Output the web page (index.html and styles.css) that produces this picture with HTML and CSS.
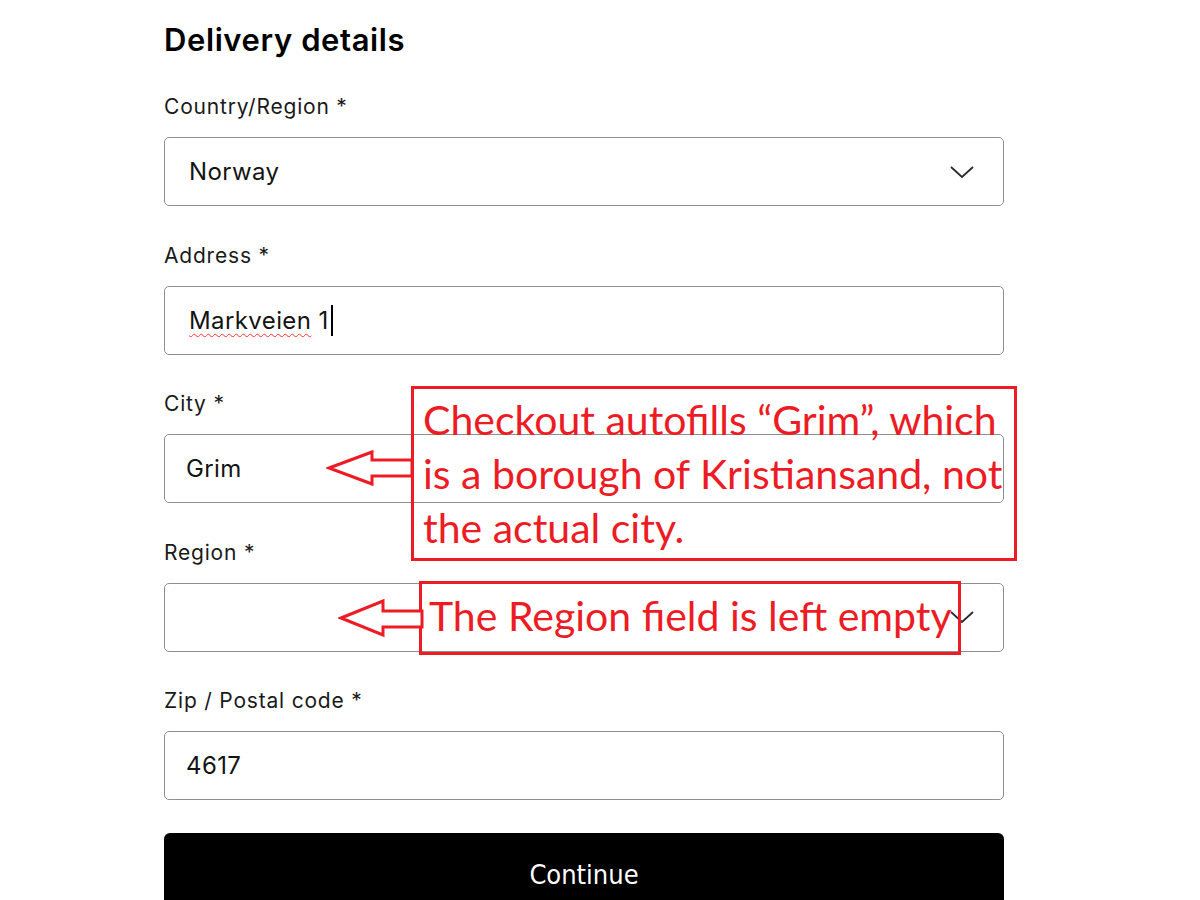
FILE: index.html
```html
<!DOCTYPE html>
<html lang="en">
<head>
<meta charset="utf-8">
<title>Delivery details</title>
<link rel="stylesheet" href="styles.css">
</head>
<body>
<main class="form">
  <h2 class="title">Delivery details</h2>

  <div class="field">
    <div class="label">Country/Region *</div>
    <div class="control select">
      <span class="value value-select">Norway</span>
      <svg class="chevron" width="26" height="14" viewBox="0 0 26 14"><polyline points="2,2 13,12 24,2" fill="none" stroke="#2b2b2b" stroke-width="1.8"/></svg>
    </div>
  </div>

  <div class="field">
    <div class="label">Address *</div>
    <div class="control">
      <span class="value value-select"><span class="misspelled">Markveien</span> 1</span><span class="caret"></span>
    </div>
  </div>

  <div class="field">
    <div class="label">City *</div>
    <div class="control">
      <span class="value">Grim</span>
    </div>
  </div>

  <div class="field">
    <div class="label">Region *</div>
    <div class="control select">
      <span class="value"></span>
      <svg class="chevron" width="26" height="14" viewBox="0 0 26 14"><polyline points="2,2 13,12 24,2" fill="none" stroke="#2b2b2b" stroke-width="1.8"/></svg>
    </div>
  </div>

  <div class="field field-last">
    <div class="label">Zip / Postal code *</div>
    <div class="control">
      <span class="value">4617</span>
    </div>
  </div>

  <button class="continue">Continue</button>
</main>

<div class="note note-city">Checkout autofills “Grim”, which<br>is a borough of Kristiansand, not<br>the actual city.</div>
<svg class="arrow arrow-city" width="90" height="40" viewBox="0 0 90 40"><polygon points="3,19 46,3 46,11 86,11 86,27 46,27 46,35" fill="#fff" stroke="#ed1c24" stroke-width="3" stroke-linejoin="miter"/></svg>

<div class="note note-region">The Region field is left empty</div>
<svg class="arrow arrow-region" width="90" height="42" viewBox="0 0 90 42"><polygon points="3,20 45,3 45,13 84,13 84,29 45,29 45,37" fill="#fff" stroke="#ed1c24" stroke-width="3" stroke-linejoin="miter"/></svg>
</body>
</html>
```

FILE: styles.css
```css
html, body {
  margin: 0;
  padding: 0;
  background: #fff;
}

body {
  font-family: Inter, "Noto Sans", sans-serif;
  color: #141414;
  position: relative;
  width: 1200px;
  height: 900px;
  overflow: hidden;
}

.form {
  margin-left: 164px;
  width: 840px;
  padding-top: 20px;
}

.title {
  margin: 0 0 35px 0;
  font-size: 31px;
  line-height: 40px;
  font-weight: 600;
  color: #000;
  letter-spacing: 0.6px;
}

.field {
  display: flex;
  flex-direction: column;
  gap: 18px;
  margin-bottom: 37.5px;
}

.field-last {
  margin-bottom: 33px;
}

.label {
  font-size: 21px;
  line-height: 24px;
  color: #1a1a1a;
  letter-spacing: 0.8px;
}

.control {
  box-sizing: border-box;
  height: 69px;
  border: 1px solid #8f8f8f;
  border-radius: 5px;
  display: flex;
  align-items: center;
  padding: 0 22px 0 21px;
  background: #fff;
}

.select {
  justify-content: space-between;
}

.value {
  font-size: 24px;
  color: #141414;
  letter-spacing: 0.4px;
}

.value-select {
  padding-left: 3px;
}

.misspelled {
  text-decoration: underline wavy #ff3030;
  text-decoration-thickness: 1px;
  text-underline-offset: 4px;
}

.caret {
  display: inline-block;
  width: 2px;
  height: 31px;
  background: #000;
  margin-left: 2px;
}

.chevron {
  margin-right: 6px;
}

.continue {
  display: block;
  width: 840px;
  height: 82px;
  border: 0;
  border-radius: 6px;
  background: #000;
  color: #fff;
  font-family: "DejaVu Sans Condensed", "DejaVu Sans", sans-serif;
  font-size: 27px;
  padding: 0;
}

.note {
  position: absolute;
  box-sizing: border-box;
  border: 3px solid #ed1c24;
  color: #ed1c24;
  font-family: Lato, "Noto Sans", sans-serif;
  font-size: 41px;
  white-space: nowrap;
}

.note-city {
  left: 411px;
  top: 386px;
  width: 606px;
  height: 175px;
  line-height: 54px;
  padding: 4px 0 0 9px;
}

.note-region {
  left: 419px;
  top: 581px;
  width: 542px;
  height: 74px;
  line-height: 64px;
  padding-left: 7px;
}

.arrow {
  position: absolute;
}

.arrow-city {
  left: 326px;
  top: 449px;
}

.arrow-region {
  left: 338px;
  top: 598px;
}
```
